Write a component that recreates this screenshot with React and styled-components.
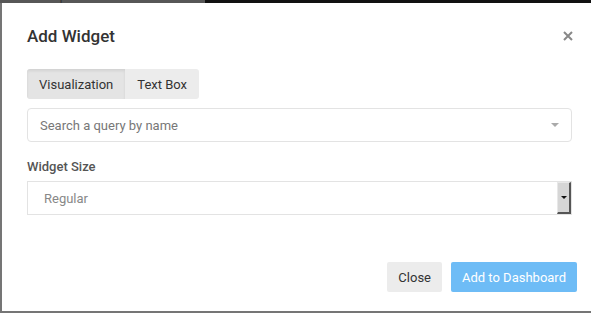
import styled, { createGlobalStyle } from "styled-components";

const Global = createGlobalStyle`
  html, body { margin: 0; padding: 0; }
  body {
    background: #111;
    font-family: Roboto, "Liberation Sans", sans-serif;
    overflow: hidden;
  }
`;

const Page = styled.div`
  position: relative;
  width: 591px;
  height: 313px;
  overflow: hidden;
  background: #111;
`;

const TopBar = styled.div`
  height: 3px;
  overflow: hidden;
  display: flex;
  align-items: flex-end;
`;

const BgSearch = styled.div`
  flex: none;
  width: 205px;
  height: 30px;
  background: #575757;
  color: #333;
  font-size: 13px;
  display: flex;
  align-items: flex-end;
  padding-left: 12px;
  box-sizing: border-box;
  line-height: 14px;
`;

const Modal = styled.div`
  position: absolute;
  left: 0;
  top: 3px;
  width: 600px;
  height: 308px;
  background: #fff;
  border-left: 2px solid #757575;
  border-bottom: 2px solid #757575;
  display: flex;
  flex-direction: column;
`;

const Header = styled.div`
  display: flex;
  align-items: center;
  justify-content: space-between;
  padding: 22px 0 0 25px;
  width: 571px;
  box-sizing: border-box;
`;

const Title = styled.h4`
  margin: 0;
  font-size: 17px;
  font-weight: 500;
  color: #333;
  line-height: 22px;
`;

const CloseX = styled.button`
  border: 0;
  background: none;
  padding: 0;
  width: 10px;
  height: 10px;
  display: flex;
  cursor: pointer;
`;

const Body = styled.div`
  padding: 22px 0 0 25px;
  width: 570px;
  box-sizing: border-box;
  display: flex;
  flex-direction: column;
`;

const Tabs = styled.div`
  display: flex;
  align-self: flex-start;
  border-radius: 3px;
  overflow: hidden;
  margin-bottom: 9px;
`;

const Tab = styled.div`
  height: 30px;
  display: flex;
  align-items: center;
  padding: 0 12px;
  font-size: 13px;
  color: #333;
  background: ${(p) => (p.$active ? "#e4e4e4" : "#ececec")};
  box-shadow: ${(p) => (p.$active ? "inset 0 2px 3px rgba(0,0,0,0.08)" : "none")};
`;

const Select = styled.div`
  height: 34px;
  box-sizing: border-box;
  border: 1px solid #e3e3e3;
  border-radius: ${(p) => (p.$rounded ? "4px" : "0")};
  display: flex;
  align-items: center;
  justify-content: space-between;
  font-size: 13px;
  color: ${(p) => (p.$muted ? "#888" : "#777")};
  padding-left: ${(p) => (p.$rounded ? "12px" : "16px")};
`;

const Caret = styled.span`
  width: 0;
  height: 0;
  border-left: 4px solid transparent;
  border-right: 4px solid transparent;
  border-top: 4px solid #aaa;
  margin-right: 12px;
`;

const NativeArrow = styled.span`
  align-self: stretch;
  width: 14px;
  background: #d6d6d6;
  border-top: 1px solid #e8e8e8;
  border-left: 1px solid #e8e8e8;
  border-right: 2px solid #555;
  border-bottom: 2px solid #555;
  display: flex;
  align-items: center;
  justify-content: center;
  box-sizing: border-box;
  &::after {
    content: "";
    border-left: 3px solid transparent;
    border-right: 3px solid transparent;
    border-top: 3px solid #111;
  }
`;

const Label = styled.div`
  margin: 17px 0 6px;
  font-size: 13px;
  font-weight: 500;
  color: #555;
  line-height: 16px;
`;

const Footer = styled.div`
  margin-top: auto;
  display: flex;
  justify-content: flex-end;
  gap: 9px;
  width: 575px;
  padding-bottom: 19px;
`;

const Button = styled.button`
  height: 30px;
  border: 0;
  border-radius: 2px;
  padding: 0 11px;
  font-family: inherit;
  font-size: 13px;
  background: ${(p) => (p.$primary ? "#6ebcf6" : "#ececec")};
  color: ${(p) => (p.$primary ? "#fff" : "#333")};
`;

export default function App() {
  return (
    <Page>
      <Global />
      <TopBar>
        <BgSearch>Search queries...</BgSearch>
      </TopBar>
      <Modal>
        <Header>
          <Title>Add Widget</Title>
          <CloseX aria-label="close">
            <svg width="10" height="10" viewBox="0 0 10 10">
              <path d="M1 1L9 9M9 1L1 9" stroke="#888" strokeWidth="2" />
            </svg>
          </CloseX>
        </Header>
        <Body>
          <Tabs>
            <Tab $active>Visualization</Tab>
            <Tab>Text Box</Tab>
          </Tabs>
          <Select $rounded>
            Search a query by name
            <Caret />
          </Select>
          <Label>Widget Size</Label>
          <Select $muted>
            Regular
            <NativeArrow />
          </Select>
        </Body>
        <Footer>
          <Button>Close</Button>
          <Button $primary>Add to Dashboard</Button>
        </Footer>
      </Modal>
    </Page>
  );
}
